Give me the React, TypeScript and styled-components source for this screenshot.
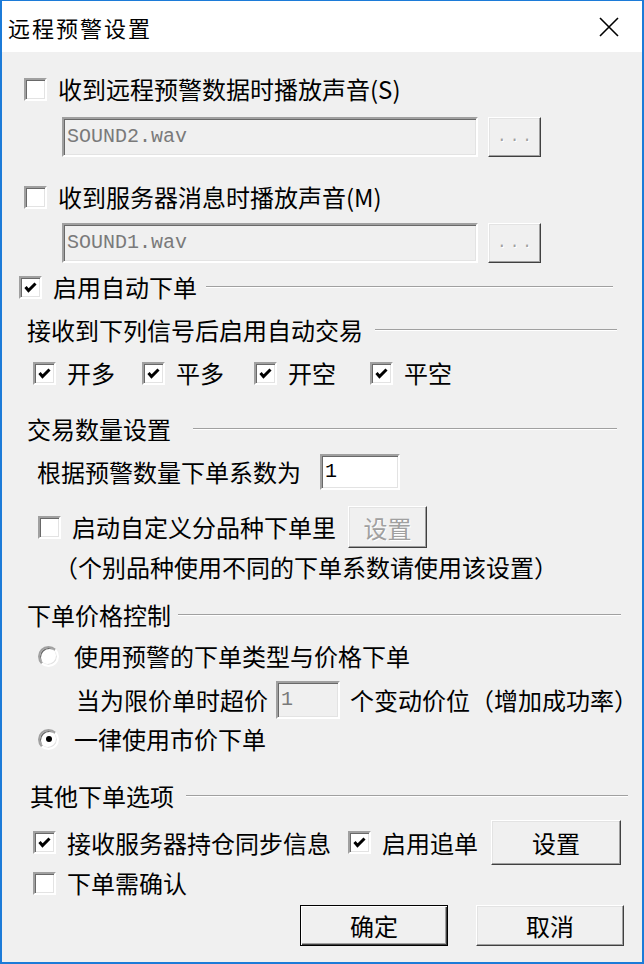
import styled, { createGlobalStyle } from 'styled-components';

const GlobalStyle = createGlobalStyle`
  html, body {
    margin: 0;
    padding: 0;
    background: #fff;
  }
`;

const Window = styled.div`
  background: #f0f0f0;
  border: 2px solid #1c7bd8;
  border-top-width: 1px;
  box-sizing: border-box;
  color: #000;
  display: flex;
  flex-direction: column;
  font-family: 'Noto Sans CJK SC', 'Noto Sans', sans-serif;
  font-size: 24px;
  height: 964px;
  line-height: 1;
  overflow: hidden;
  width: 644px;
`;

const TitleBar = styled.header`
  align-items: center;
  background: #fff;
  display: flex;
  flex: none;
  height: 51px;
  justify-content: space-between;
  padding: 0 22px 0 6px;
`;

const Title = styled.h1`
  font-size: 22px;
  font-weight: normal;
  letter-spacing: 2px;
  margin: 0;
`;

const Row = styled.div<{ $top: number; $left: number; $h?: number }>`
  align-items: center;
  display: flex;
  flex: none;
  height: ${(p) => p.$h ?? 30}px;
  margin-top: ${(p) => p.$top}px;
  padding-left: ${(p) => p.$left - 2}px;
`;

const ButtonBar = styled.div`
  display: flex;
  flex: none;
  gap: 28px;
  justify-content: flex-end;
  margin-top: 7px;
  padding-right: 18px;
`;

const SignalGrid = styled.div`
  display: grid;
  grid-template-columns: 109px 112px 116px auto;
`;

const Label = styled.span<{ $ml?: number }>`
  margin-left: ${(p) => p.$ml ?? 0}px;
  white-space: nowrap;
`;

const Rule = styled.span<{ $gap: number; $end: number }>`
  border-bottom: 1px solid #fff;
  border-top: 1px solid #a0a0a0;
  flex: 1;
  height: 0;
  margin-left: ${(p) => p.$gap}px;
  margin-right: ${(p) => 642 - p.$end}px;
`;

const Item = styled.span`
  align-items: center;
  display: flex;
`;

const Box = styled.span<{ $ml?: number }>`
  align-items: center;
  background: #fff;
  border: 2px solid;
  border-color: #a0a0a0 #fff #fff #a0a0a0;
  box-shadow:
    inset 1px 1px #696969,
    inset -1px -1px #e3e3e3;
  box-sizing: border-box;
  display: inline-flex;
  flex: none;
  height: 23px;
  justify-content: center;
  margin-left: ${(p) => p.$ml ?? 0}px;
  margin-right: 11px;
  width: 23px;
`;

const RadioDot = styled.span<{ $on?: boolean }>`
  align-items: center;
  background: #fff;
  border: 2px solid;
  border-color: #a0a0a0 #fff #fff #a0a0a0;
  border-radius: 50%;
  box-shadow:
    inset 1px 1px #696969,
    inset -1px -1px #e3e3e3;
  box-sizing: border-box;
  display: inline-flex;
  flex: none;
  height: 21px;
  justify-content: center;
  margin-right: 15px;
  width: 21px;

  &::after {
    background: ${(p) => (p.$on ? '#000' : 'transparent')};
    border-radius: 50%;
    content: '';
    height: 6px;
    width: 6px;
  }
`;

const Field = styled.div<{ $w: number; $h: number; $disabled?: boolean; $ml?: number }>`
  align-items: center;
  background: ${(p) => (p.$disabled ? '#f0f0f0' : '#fff')};
  border: 2px solid;
  border-color: #a0a0a0 #fff #fff #a0a0a0;
  box-shadow:
    inset 1px 1px #696969,
    inset -1px -1px #e3e3e3;
  box-sizing: border-box;
  color: ${(p) => (p.$disabled ? '#7a7a7a' : '#000')};
  display: flex;
  flex: none;
  font-family: 'Liberation Mono', monospace;
  font-size: 20px;
  height: ${(p) => p.$h}px;
  margin-left: ${(p) => p.$ml ?? 0}px;
  padding-left: 3px;
  width: ${(p) => p.$w}px;
`;

const Button = styled.button<{
  $w: number;
  $h: number;
  $ml?: number;
  $disabled?: boolean;
  $primary?: boolean;
}>`
  align-items: center;
  background: #f0f0f0;
  border: 1px solid;
  border-color: ${(p) => (p.$primary ? '#000' : '#fff #404040 #404040 #fff')};
  box-shadow: ${(p) =>
    p.$primary
      ? 'inset 1px 1px #fff, inset -1px -1px #404040, inset -2px -2px #a0a0a0'
      : 'inset -1px -1px #a0a0a0, inset 1px 1px #e3e3e3'};
  box-sizing: border-box;
  color: ${(p) => (p.$disabled ? '#a0a0a0' : '#000')};
  display: inline-flex;
  flex: none;
  font-family: inherit;
  font-size: 24px;
  height: ${(p) => p.$h}px;
  justify-content: center;
  margin-left: ${(p) => p.$ml ?? 0}px;
  padding: 0;
  text-shadow: ${(p) => (p.$disabled ? '1px 1px 0 #fff' : 'none')};
  width: ${(p) => p.$w}px;
`;

const Dots = styled.span`
  font-family: 'Liberation Mono', monospace;
  font-size: 16px;
  letter-spacing: 3px;
  padding-left: 3px;
`;

const Close = () => (
  <svg width="22" height="22" viewBox="0 0 22 22">
    <path d="M2 2 L20 20 M20 2 L2 20" stroke="#000" strokeWidth="1.6" fill="none" />
  </svg>
);

const Check = ({ on }: { on?: boolean }) =>
  on ? (
    <svg width="15" height="15" viewBox="0 0 15 15">
      <path d="M2.5 7 L5.5 10.5 L12.5 3.5" stroke="#000" strokeWidth="3" fill="none" />
    </svg>
  ) : null;

const CheckBox = ({ on, ml }: { on?: boolean; ml?: number }) => (
  <Box $ml={ml}>
    <Check on={on} />
  </Box>
);

const signals = ['开多', '平多', '开空', '平空'];

export default function App() {
  return (
    <>
      <GlobalStyle />
      <Window>
        <TitleBar>
          <Title>远程预警设置</Title>
          <Close />
        </TitleBar>

        <Row $top={22} $left={24}>
          <CheckBox />
          <Label>收到远程预警数据时播放声音(S)</Label>
        </Row>
        <Row $top={13} $left={62} $h={40}>
          <Field $w={416} $h={40} $disabled>
            SOUND2.wav
          </Field>
          <Button $w={53} $h={40} $ml={10} $disabled>
            <Dots>...</Dots>
          </Button>
        </Row>

        <Row $top={25} $left={24}>
          <CheckBox />
          <Label>收到服务器消息时播放声音(M)</Label>
        </Row>
        <Row $top={11} $left={62} $h={40}>
          <Field $w={416} $h={40} $disabled>
            SOUND1.wav
          </Field>
          <Button $w={53} $h={40} $ml={10} $disabled>
            <Dots>...</Dots>
          </Button>
        </Row>

        <Row $top={9} $left={19}>
          <CheckBox on />
          <Label>启用自动下单</Label>
          <Rule $gap={9} $end={613} />
        </Row>

        <Row $top={13} $left={27}>
          <Label>接收到下列信号后启用自动交易</Label>
          <Rule $gap={12} $end={617} />
        </Row>
        <Row $top={13} $left={33}>
          <SignalGrid>
            {signals.map((s) => (
              <Item key={s}>
                <CheckBox on />
                <Label>{s}</Label>
              </Item>
            ))}
          </SignalGrid>
        </Row>

        <Row $top={26} $left={27}>
          <Label>交易数量设置</Label>
          <Rule $gap={22} $end={617} />
        </Row>
        <Row $top={10} $left={37} $h={36}>
          <Label>根据预警数量下单系数为</Label>
          <Field $w={80} $h={36} $ml={19}>
            1
          </Field>
        </Row>
        <Row $top={16} $left={38} $h={42}>
          <CheckBox />
          <Label>启动自定义分品种下单里</Label>
          <Button $w={79} $h={42} $ml={12} $disabled>
            设置
          </Button>
        </Row>
        <Row $top={4} $left={54}>
          <Label>（个别品种使用不同的下单系数请使用该设置）</Label>
        </Row>

        <Row $top={18} $left={27}>
          <Label>下单价格控制</Label>
          <Rule $gap={7} $end={621} />
        </Row>
        <Row $top={11} $left={38}>
          <RadioDot />
          <Label>使用预警的下单类型与价格下单</Label>
        </Row>
        <Row $top={10} $left={76} $h={38}>
          <Label>当为限价单时超价</Label>
          <Field $w={64} $h={38} $ml={8} $disabled>
            1
          </Field>
          <Label $ml={10}>个变动价位（增加成功率）</Label>
        </Row>
        <Row $top={5} $left={38}>
          <RadioDot $on />
          <Label>一律使用市价下单</Label>
        </Row>

        <Row $top={27} $left={30}>
          <Label>其他下单选项</Label>
          <Rule $gap={12} $end={628} />
        </Row>
        <Row $top={9} $left={33} $h={45}>
          <CheckBox on />
          <Label>接收服务器持仓同步信息</Label>
          <CheckBox on ml={17} />
          <Label>启用追单</Label>
          <Button $w={130} $h={45} $ml={13}>
            设置
          </Button>
        </Row>
        <Row $top={3} $left={33}>
          <CheckBox />
          <Label>下单需确认</Label>
        </Row>

        <ButtonBar>
          <Button $w={148} $h={41} $primary>
            确定
          </Button>
          <Button $w={148} $h={41}>
            取消
          </Button>
        </ButtonBar>
      </Window>
    </>
  );
}
